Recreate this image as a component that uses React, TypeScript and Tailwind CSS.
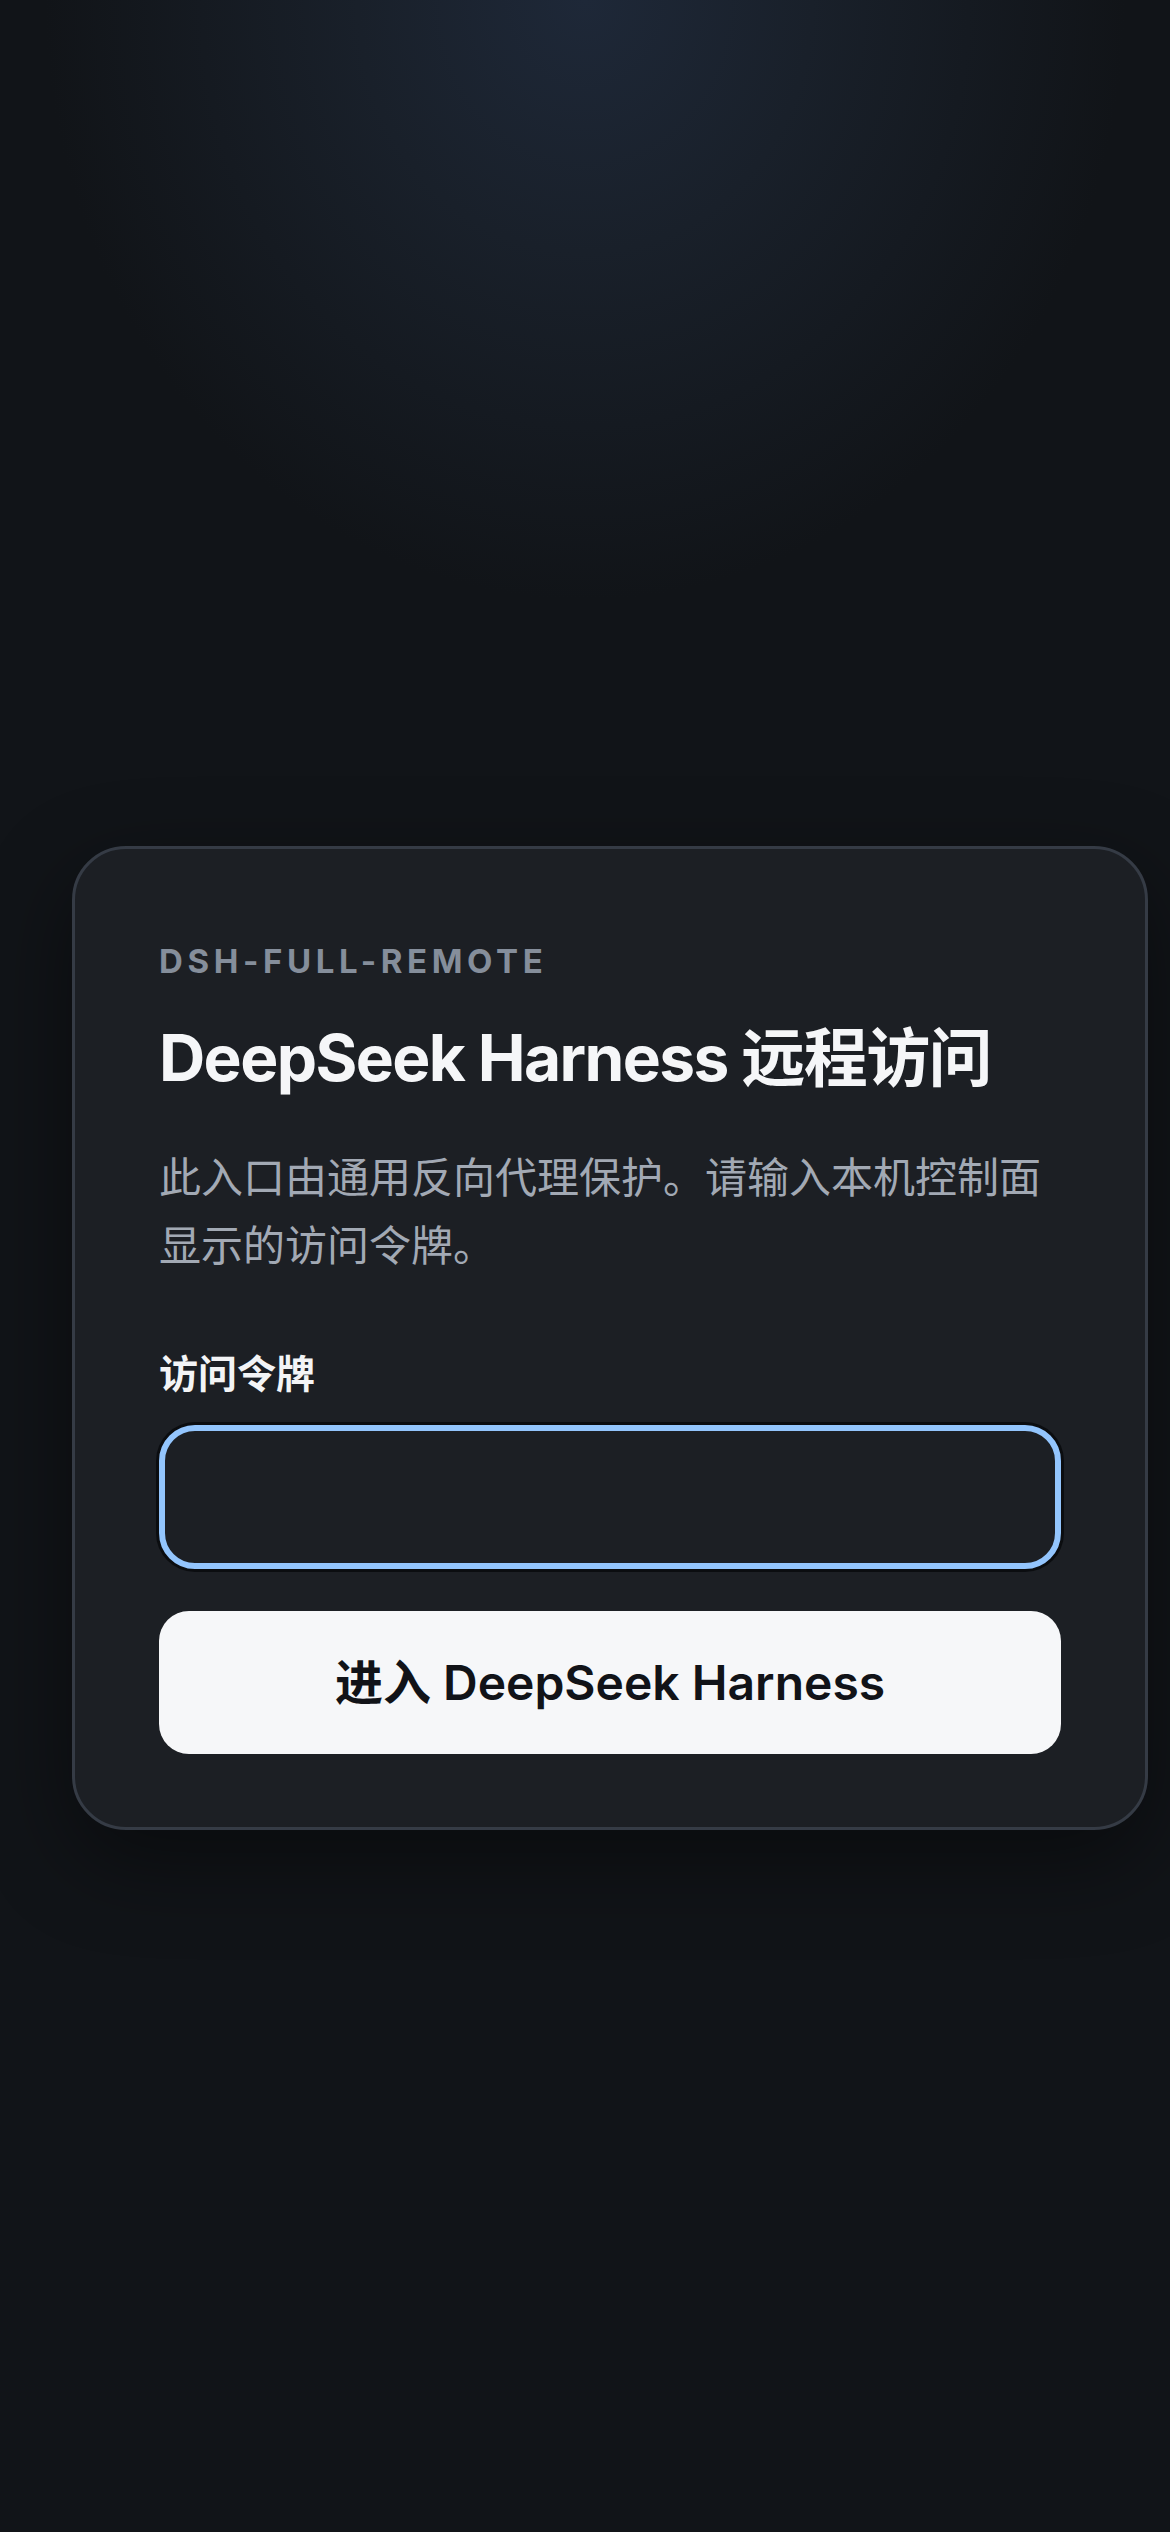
export default function App() {
  return (
    <main className="min-h-screen w-full bg-[#111418] bg-[radial-gradient(ellipse_540px_600px_at_50%_0%,#1e2838_0%,#19202a_42%,#111418_100%)] pl-[72px] pt-[846px] font-['Inter','Noto_Sans_CJK_SC',sans-serif]">
      <section className="w-[1076px] rounded-[54px] border-[3px] border-[#353b45] bg-[#1c1f24] px-[84px] pt-[92px] pb-[73px] shadow-[0_30px_90px_rgba(0,0,0,0.45)]">
        <p className="text-[33px] font-bold uppercase leading-[40px] tracking-[0.14em] text-[#858e9b]">
          DSH-FULL-REMOTE
        </p>
        <h1 className="mt-[37px] text-[64px] font-bold leading-[79px] tracking-[-0.025em] text-[#f5f6f8]">
          DeepSeek Harness 远程访问
        </h1>
        <p className="mt-[47px] text-[42px] leading-[68px] text-[#a2a9b4]">
          此入口由通用反向代理保护。请输入本机控制面显示的访问令牌。
        </p>

        <form className="mt-[65px] flex flex-col" onSubmit={(event) => event.preventDefault()}>
          <label className="block text-[39px] font-semibold leading-[58px] text-[#f3f4f6]">
            访问令牌
            <input
              type="password"
              className="mt-[22px] block h-[144px] w-full rounded-[36px] border-[6px] border-[#93c5fd] bg-[#1c1f24] px-[42px] text-[42px] text-white shadow-[0_0_0_3px_#0b0d10] outline-none"
            />
          </label>

          <button
            type="submit"
            className="mt-[42px] h-[143px] w-full rounded-[30px] bg-[#f6f7f9] text-[48px] font-semibold text-[#111318]"
          >
            进入 DeepSeek Harness
          </button>
        </form>
      </section>
    </main>
  );
}
